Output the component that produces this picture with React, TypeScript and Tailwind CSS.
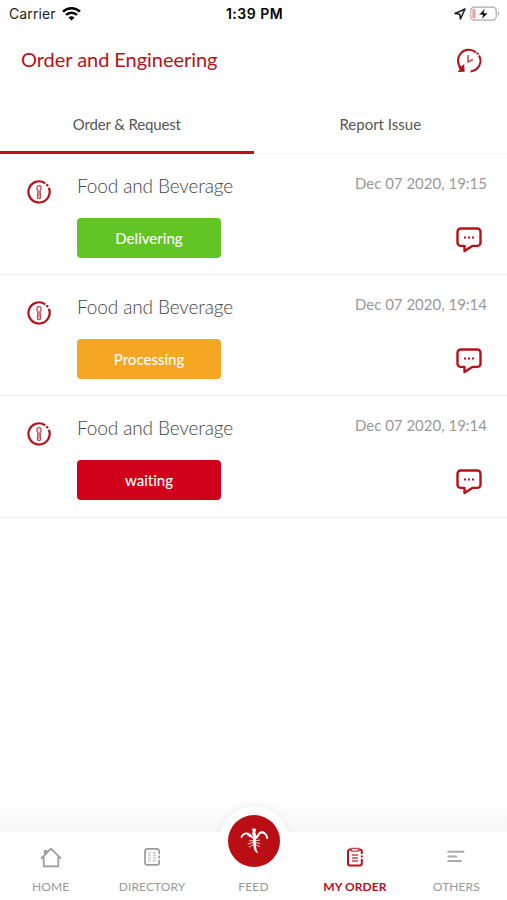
import type { ReactNode } from 'react';

const orders = [
  { title: 'Food and Beverage', date: 'Dec 07 2020, 19:15', status: 'Delivering', color: 'bg-[#62c425]', height: 'h-[121px]' },
  { title: 'Food and Beverage', date: 'Dec 07 2020, 19:14', status: 'Processing', color: 'bg-[#f5a623]', height: 'h-[121px]' },
  { title: 'Food and Beverage', date: 'Dec 07 2020, 19:14', status: 'waiting', color: 'bg-[#d0021b]', height: 'h-[122px]' },
];

function StatusBar() {
  return (
    <div className="grid grid-cols-3 items-center h-[27px] pl-[9px] pr-[7px] font-['Inter',sans-serif] text-[14px] text-[#222]">
      <div className="flex items-center gap-[6px]">
        <span className="tracking-[0.1px]">Carrier</span>
        <svg width="19" height="14" viewBox="0 0 19 14" fill="none" stroke="#000" strokeWidth="2.5">
          <path d="M1 4.7a12.2 12.2 0 0 1 17 0" />
          <path d="M4 7.9a7.8 7.8 0 0 1 11 0" />
          <path d="M9.5 13.6L6.5 10.6a4.3 4.3 0 0 1 6 0z" fill="#000" stroke="none" />
        </svg>
      </div>
      <div className="text-center font-semibold text-black tracking-[0.5px] whitespace-nowrap">1:39 PM</div>
      <div className="flex items-center justify-end gap-[4px]">
        <svg width="12" height="12" viewBox="0 0 12 12" fill="none" stroke="#222" strokeWidth="1.6" strokeLinejoin="round">
          <path d="M11 1L1 5.4l4.7 .9L6.5 11z" />
        </svg>
        <svg width="30" height="16" viewBox="0 0 30 16" fill="none">
          <rect x="0.7" y="1.2" width="25.5" height="13" rx="3.6" stroke="#aaa" strokeWidth="1.2" />
          <path d="M27.8 5.6c2 .8 2 3.6 0 4.4z" fill="#aaa" />
          <rect x="2.4" y="3" width="3" height="9.4" rx="1.2" fill="#f59a9a" />
          <path d="M15.3 2L8.7 8.9h4.1L11.4 13.8 18.2 6.9h-4.3z" fill="#000" stroke="#fff" strokeWidth="0.7" />
        </svg>
      </div>
    </div>
  );
}

function HistoryIcon() {
  return (
    <svg width="26" height="26" viewBox="0 0 26 26" fill="none" stroke="#b5121b" strokeWidth="2">
      <path d="M5.6 20.6A10.6 10.6 0 0 1 20 4.5" />
      <path d="M23 7.5A10.6 10.6 0 0 1 14.5 23.4" />
      <circle cx="21.6" cy="5.6" r="1.2" fill="#b5121b" stroke="none" />
      <path d="M2 18.2l2.4 1 3.8-3.2.4 7.8-7 .2 2-2.4z" fill="#b5121b" stroke="none" />
      <path d="M12 7v7l5-2.5" strokeWidth="1.5" stroke="#c4454c" />
    </svg>
  );
}

function ServiceIcon() {
  return (
    <svg width="24" height="24" viewBox="0 0 24 24" fill="none" stroke="#b5121b" strokeWidth="2.2">
      <path d="M18.2 3.3A10.6 10.6 0 1 0 21.8 7.8" />
      <circle cx="20.2" cy="5.2" r="1.2" fill="#b5121b" stroke="none" />
      <path d="M10.9 10.2c-1.6-1-1.4-4.6 1.1-4.6s2.7 3.6 1.1 4.6l.4 7.4c0 1.2-3 1.2-3 0z" strokeWidth="1.3" stroke="#c4454c" />
      <path d="M12 11v6" strokeWidth="0.6" />
    </svg>
  );
}

function ChatIcon() {
  return (
    <svg width="26" height="26" viewBox="0 0 26 26" fill="none" stroke="#b5121b" strokeWidth="2.4" strokeLinejoin="round">
      <path d="M4.7 1.5h16.6a3.2 3.2 0 0 1 3.2 3.2v11a3.2 3.2 0 0 1-3.2 3.2h-5L8.5 24v-5.1H4.7a3.2 3.2 0 0 1-3.2-3.2v-11a3.2 3.2 0 0 1 3.2-3.2z" />
      <path d="M8 10.5h2M12 10.5h2M16 10.5h2" strokeWidth="2.2" />
    </svg>
  );
}

function HomeIcon() {
  return (
    <svg width="22" height="22" viewBox="0 0 22 22" fill="none" stroke="#9b9b9b" strokeWidth="1.7" strokeLinejoin="round">
      <path d="M1 12.6L11 2.6l10 10M3.7 10.5v9.8h14.6v-9.8M4.8 8V4.8h2.4" />
    </svg>
  );
}

function DirectoryIcon() {
  return (
    <svg width="22" height="22" viewBox="0 0 22 22" fill="none" stroke="#9b9b9b" strokeWidth="1.7">
      <path d="M18.2 8V5.1A2.2 2.2 0 0 0 16 2.9H6.2A2.2 2.2 0 0 0 4 5.1v11.6a2.2 2.2 0 0 0 2.2 2.2H16a2.2 2.2 0 0 0 2.2-2.2V14" />
      <path d="M18.2 9.5v3" />
      <path d="M8.4 6v10M13.4 6v10" strokeWidth="2.6" strokeDasharray="1.6 1" opacity="0.55" />
    </svg>
  );
}

function OrderIcon() {
  return (
    <svg width="22" height="22" viewBox="0 0 22 22" fill="none" stroke="#b5121b" strokeWidth="2">
      <path d="M7 3.6H6a2 2 0 0 0-2 2v11.8a2 2 0 0 0 2 2h9.8a2 2 0 0 0 2-2V13M15 3.6h.8a2 2 0 0 1 2 2V8" />
      <path d="M17.8 9.5v2" />
      <path d="M7.5 2.3h6.8v2.9H7.5z" strokeWidth="1.3" stroke="#c4454c" />
      <path d="M8 9h6M8 12h6M8 15h6" strokeWidth="1.4" stroke="#c4454c" />
    </svg>
  );
}

function OthersIcon() {
  return (
    <svg width="22" height="22" viewBox="0 0 22 22" fill="none" stroke="#aaa" strokeWidth="2" strokeLinecap="round">
      <path d="M3.3 5.8h15.2M3.3 10.4h8M3.3 15h12.5" />
    </svg>
  );
}

function FeedLogo() {
  return (
    <svg width="34" height="34" viewBox="0 0 34 34" fill="none" stroke="#fff" strokeLinecap="round">
      {/* head, body and tail */}
      <path d="M14.8 4.6l4.4.2-.9 4 1.3 2.7-.8 4.5.3 6c.2 3.500.8 5 2.4 7.500-3.400-1.300-4.900-3.700-4.900-7l-.8-5.500.6-4.500-1.400-2.500.8-2.500z" fill="#fff" stroke="none" />
      {/* claws */}
      <path d="M15.800 13.500c-1.800-.5-2-2.200-3.500-3.200-2.800-1.800-6.300-.8-7.800 2.700M18.800 14c2.700-.7 2-3.300 3.700-4.700 2.500-2 7-.3 7.700 4.700" strokeWidth="1.900" />
      <path d="M22 9.500c1.500-2.200 4-2.200 5.500-.5M10.500 10.500l2.500 2" strokeWidth="1.300" />
      {/* legs */}
      <path d="M16 16.500l-3.700.5M16 18.500l-5 1.500M16.500 20.500l-4 2.500M19 16.500l3.500-.3M19 18.500l4 1M19.200 20.700l3.300 1.800" strokeWidth="0.800" />
    </svg>
  );
}

function NavItem({ icon, label, active = false }: { icon: ReactNode; label: string; active?: boolean }) {
  return (
    <div className="flex flex-1 flex-col items-center pt-[14px]">
      {icon}
      <span
        className={
          active
            ? 'mt-[11px] text-[12px] leading-4 font-bold tracking-[0.05px] text-[#b5121b] whitespace-nowrap'
            : 'mt-[11px] text-[12px] leading-4 tracking-[0.1px] text-[#999] whitespace-nowrap'
        }
      >
        {label}
      </span>
    </div>
  );
}

export default function App() {
  return (
    <div className="flex h-[900px] w-full flex-col overflow-hidden bg-white font-['Lato',sans-serif] [font-variant-ligatures:none]">
      <StatusBar />

      <header className="flex h-[67px] items-center justify-between pl-[21px] pr-[25px]">
        <h1 className="-mt-[3px] text-[20px] leading-6 tracking-[-0.05px] text-[#b5121b]">Order and Engineering</h1>
        <HistoryIcon />
      </header>

      {/* Tabs */}
      <div className="grid h-[60px] grid-cols-2 text-center text-[15px] text-[#555]">
        <div className="border-b-[3px] border-[#b5121b] pt-[19px] tracking-[-0.15px]">Order &amp; Request</div>
        <div className="border-b border-[#f5f5f5] pt-[19px]">Report Issue</div>
      </div>

      {/* Order list */}
      <main className="flex-1">
        {orders.map((order, i) => (
          <div key={i} className={`${order.height} flex border-b border-[#ececec] pl-[27px] pr-[20px]`}>
            <div className="w-[50px] pt-[26px]">
              <ServiceIcon />
            </div>
            <div className="flex-1 pt-[20px]">
              <div className="text-[19px] leading-6 font-light tracking-[-0.12px] text-[#444] whitespace-nowrap">{order.title}</div>
              <div className={`${order.color} mt-5 flex h-10 w-[144px] items-center justify-center rounded text-[15px] font-medium text-white`}>
                {order.status}
              </div>
            </div>
            <div className="flex flex-col items-end pt-[19px]">
              <span className="text-[15px] leading-5 text-[#999] whitespace-nowrap">{order.date}</span>
              <div className="mt-[34px] mr-[5px]">
                <ChatIcon />
              </div>
            </div>
          </div>
        ))}
      </main>

      {/* Bottom navigation */}
      <div className="h-8 bg-gradient-to-b from-white to-[#f6f6f6]"></div>
      <nav className="relative flex h-[68px] bg-white">
        <div className="absolute left-1/2 top-[-26px] h-[70px] w-[70px] -translate-x-1/2 rounded-full bg-white shadow-[0_-2px_6px_rgba(0,0,0,0.05)]"></div>
        <div className="absolute left-0 top-0 h-full w-full bg-white"></div>
        <div className="relative flex w-full">
          <NavItem icon={<HomeIcon />} label="HOME" />
          <NavItem icon={<DirectoryIcon />} label="DIRECTORY" />
          <div className="flex flex-1 flex-col items-center pt-[47px]">
            <div className="absolute top-[-17px] flex h-[52px] w-[52px] items-center justify-center rounded-full bg-[#b90e14]">
              <FeedLogo />
            </div>
            <span className="text-[12px] leading-4 tracking-[0.2px] text-[#999]">FEED</span>
          </div>
          <NavItem icon={<OrderIcon />} label="MY ORDER" active />
          <NavItem icon={<OthersIcon />} label="OTHERS" />
        </div>
      </nav>
    </div>
  );
}
